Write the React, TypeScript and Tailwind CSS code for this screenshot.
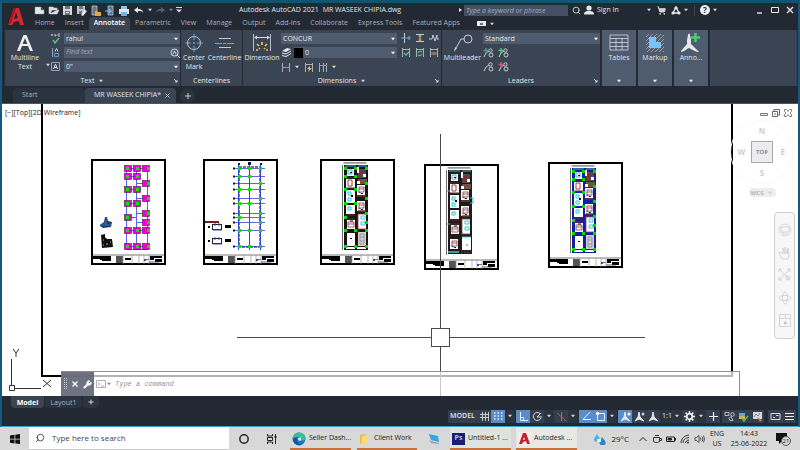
import type { ReactNode } from "react";
import { Circle, Search, ShoppingCart, Wrench } from "lucide-react";

type Point = [number, number];

function Icon({ w = 12, h = 12, children }: { w?: number; h?: number; children: ReactNode }) {
  return (
    <svg width={w} height={h} viewBox={`0 0 ${w} ${h}`} fill="none" className="shrink-0" aria-hidden="true">
      {children}
    </svg>
  );
}

function Caret({ className = "text-[#d5d9df]" }: { className?: string }) {
  return (
    <svg width="6" height="4" viewBox="0 0 6 4" className={`shrink-0 ${className}`} aria-hidden="true">
      <path d="M1 0.8h4L3 3.2z" fill="currentColor" />
    </svg>
  );
}

function IconButton({ label, className = "", children }: { label: string; className?: string; children: ReactNode }) {
  return (
    <button type="button" aria-label={label} className={`flex shrink-0 items-center justify-center ${className}`}>
      {children}
    </button>
  );
}

/* ---------- title bar ---------- */

const quickAccess: { label: string; icon: ReactNode }[] = [
  { label: "New", icon: <path d="M1 2h6l3 3v4H1zM7 2v3h3" fill="#e6e8eb" stroke="#8f969f" strokeWidth="0.5" /> },
  { label: "Open", icon: <path d="M1 9V2h4l1 1h3v2H4L2 9h7l2-4H9" fill="#d9dce0" stroke="#d9dce0" strokeWidth="0.5" /> },
  {
    label: "Save",
    icon: (
      <>
        <path d="M1 1h9v9H1z" fill="#d3d6db" />
        <path d="M3 1h5v3H3zM3 6h5v4H3z" fill="#6b7482" />
        <path d="M4 7h3v1H4z" fill="#e6e8eb" />
      </>
    ),
  },
  {
    label: "Save As",
    icon: (
      <>
        <path d="M1 1h8v8H1z" fill="#c2c6cd" />
        <path d="M3 1h4v3H3zM3 6h3v3H3z" fill="#6b7482" />
        <path d="M5 10l4-5 2 1-4 5z" fill="#eef0f2" />
        <path d="M5 10l1-1 1 2z" fill="#e0a53f" />
      </>
    ),
  },
  {
    label: "Open from Web & Mobile",
    icon: (
      <>
        <path d="M2 1h5v9H2z" fill="#6b7482" stroke="#cfd3d9" strokeWidth="0.7" />
        <path d="M5 6h2l1 1h3v4H5z" fill="#dca84a" />
      </>
    ),
  },
  {
    label: "Save to Web & Mobile",
    icon: (
      <>
        <path d="M4 1h5v9H4z" fill="#5f7184" stroke="#b8d4ea" strokeWidth="0.7" />
        <path d="M1 6h6M5 4l2 2-2 2" stroke="#7cc3f2" strokeWidth="1.2" />
      </>
    ),
  },
  {
    label: "Plot",
    icon: (
      <>
        <path d="M3 1h6v3H3z" fill="#8ec5ee" />
        <path d="M1 4h10v5H1z" fill="#e3e6ea" />
        <path d="M3 7h6v4H3z" fill="#6fb2e4" />
      </>
    ),
  },
];

function TitleBar() {
  return (
    <div className="flex h-[14px] items-center">
      <div className="flex items-center gap-[3px] pl-1">
        {quickAccess.map((item) => (
          <IconButton key={item.label} label={item.label} className="w-[11px]">
            <Icon w={11} h={11}>{item.icon}</Icon>
          </IconButton>
        ))}
      </div>
      <IconButton label="Undo" className="ml-1 w-[21px] gap-[3px]">
        <Icon w={10} h={8}>
          <path d="M0 4l4-3v2c3 0 5 1 5 4C8 5 7 5 4 5v2z" fill="#e6e8eb" />
        </Icon>
        <Caret />
      </IconButton>
      <IconButton label="Redo" className="w-[21px] gap-[3px] opacity-50">
        <Icon w={10} h={8}>
          <path d="M10 4L6 1v2C3 3 1 4 1 7c1-2 2-2 5-2v2z" fill="#8d95a1" />
        </Icon>
        <Caret />
      </IconButton>
      <IconButton label="Customize Quick Access Toolbar" className="w-2">
        <Icon w={6} h={6}>
          <path d="M0 0.5h6" stroke="#d5d9df" />
          <path d="M0 2.5h6L3 5.5z" fill="#d5d9df" />
        </Icon>
      </IconButton>
      <h1 className="ml-[56px] flex gap-1 whitespace-pre text-[7px]">
        <span>Autodesk AutoCAD 2021</span>
        <span>MR WASEEK CHIPIA.dwg</span>
      </h1>
      <div className="flex-1" />
      <Icon w={5} h={6}>
        <path d="M1 1l3 2-3 2z" fill="#e6e8eb" />
      </Icon>
      <input
        type="text"
        aria-label="Search help"
        placeholder="Type a keyword or phrase"
        className="ml-px h-[11px] w-[104px] bg-[#465062] px-[2px] text-[7px] italic outline-none placeholder:text-[#a4acb8]"
      />
      <IconButton label="Search" className="ml-[3px] w-[10px]">
        <Search size={9} strokeWidth={2.5} className="text-[#cfd4da]" />
      </IconButton>
      <button type="button" className="ml-[3px] flex w-[68px] items-center gap-[3px] text-[7px]">
        <Icon w={10} h={10}>
          <circle cx="5" cy="3" r="2.600" fill="#e6e8eb" />
          <path d="M0 9.500c0-3 2-3.500 5-3.500s5 .5 5 3.500z" fill="#e6e8eb" />
        </Icon>
        <span className="flex-1 text-left">Sign In</span>
        <Caret />
      </button>
      <IconButton label="Autodesk App Store" className="ml-1 w-[10px]">
        <ShoppingCart size={9} strokeWidth={2.5} fill="currentColor" className="text-[#cfd4da]" />
      </IconButton>
      <IconButton label="Stay Connected" className="ml-1 w-[20px] gap-[2px]">
        <Icon w={10} h={9}>
          <path d="M5 1L2 7h6z" stroke="#e6e8eb" strokeWidth="1.3" />
          <circle cx="5" cy="2" r="1.6" fill="#e6e8eb" />
          <circle cx="2" cy="7" r="1.6" fill="#e6e8eb" />
          <circle cx="8" cy="7" r="1.6" fill="#e6e8eb" />
        </Icon>
        <Caret />
      </IconButton>
      <span className="mx-1 h-[11px] w-px bg-[#3c4552]" />
      <IconButton label="Help" className="w-[20px] gap-[2px]">
        <span className="flex h-[10px] w-[10px] items-center justify-center rounded-full bg-[#eceef0] text-[8px] font-bold leading-none text-[#222933]">
          ?
        </span>
        <Caret />
      </IconButton>
      <div className="ml-[36px] mr-[3px] flex gap-[5px]">
        <IconButton label="Minimize" className="w-[10px]">
          <Icon w={8} h={8}><path d="M1 7h5" stroke="#e6e8eb" strokeWidth="1.4" /></Icon>
        </IconButton>
        <IconButton label="Maximize" className="w-[10px]">
          <Icon w={8} h={8}><path d="M.5 1.5h7v5h-7z" stroke="#e6e8eb" /></Icon>
        </IconButton>
        <IconButton label="Close" className="w-[10px]">
          <Icon w={8} h={8}><path d="M1 1l6 6M7 1L1 7" stroke="#e6e8eb" strokeWidth="1.4" /></Icon>
        </IconButton>
      </div>
    </div>
  );
}

const ribbonTabs = [
  "Home",
  "Insert",
  "Annotate",
  "Parametric",
  "View",
  "Manage",
  "Output",
  "Add-ins",
  "Collaborate",
  "Express Tools",
  "Featured Apps",
];

function Header() {
  return (
    <header className="flex h-[27px]">
      <IconButton label="Application menu" className="w-[28px]">
        <Icon w={16} h={19}>
          <path d="M6 1h5l5 17h-4l-1-4-5 1-2 3H0z" fill="#d8262f" />
          <path d="M8 5l2 6-4 1z" fill="#222933" />
          <path d="M6 1h2L3 16l-3 2z" fill="#a5161f" />
        </Icon>
      </IconButton>
      <div className="min-w-0 flex-1">
        <TitleBar />
        <nav className="flex h-[13px] items-stretch text-[7px]">
          {ribbonTabs.map((tab) => (
            <button
              key={tab}
              type="button"
              className={
                tab === "Annotate"
                  ? "rounded-t-sm bg-[#3b4453] px-[5px] font-semibold text-white"
                  : "px-[5px] text-[#a9b0ba]"
              }
            >
              {tab}
            </button>
          ))}
          <IconButton label="Ribbon display" className="ml-3 gap-[3px]">
            <span className="flex h-[5px] w-[9px] items-center justify-center bg-[#e6e8eb]">
              <span className="h-[2px] w-[3px] bg-[#67707d]" />
            </span>
            <Caret />
          </IconButton>
        </nav>
      </div>
    </header>
  );
}

/* ---------- ribbon ---------- */

function DropDown({ label, value, swatch = false }: { label: string; value: string; swatch?: boolean }) {
  return (
    <div className="relative flex h-[11px] w-full min-w-0 items-center bg-[#4f5b6e]">
      {swatch && <span className="h-[10px] w-[9px] shrink-0 bg-black" />}
      <select
        aria-label={label}
        className="h-full min-w-0 flex-1 appearance-none bg-transparent px-[2px] text-[7px] leading-none text-[#e6e8eb] outline-none"
      >
        <option>{value}</option>
      </select>
      <span className="pointer-events-none absolute right-[1px] flex">
        <Caret className="text-white" />
      </span>
    </div>
  );
}

function Panel({ title, className, caret, launcher, children }: {
  title: string;
  className: string;
  caret?: boolean;
  launcher?: boolean;
  children: ReactNode;
}) {
  return (
    <section className={`relative flex shrink-0 flex-col bg-[#3b4453] ${className}`}>
      <div className="flex flex-1 pt-[3px]">{children}</div>
      <h2 className="flex h-[10px] items-center justify-center gap-1 text-[7px]">
        {title}
        {caret && <Caret />}
      </h2>
      {launcher && (
        <button
          type="button"
          aria-label={`${title} settings`}
          className="absolute bottom-[2px] right-[1px] flex h-[6px] w-[6px] items-center justify-center"
        >
          <Icon w={4} h={4}><path d="M0 0l3 3M3 1v2H1" stroke="#d5d9df" /></Icon>
        </button>
      )}
    </section>
  );
}

function BigButton({ lines, className, children }: { lines: string[]; className: string; children: ReactNode }) {
  return (
    <button type="button" className={`flex shrink-0 flex-col items-center text-[7px] leading-[9px] ${className}`}>
      <span className="flex h-[20px] items-center">{children}</span>
      {lines.map((line) => (
        <span key={line} className="whitespace-nowrap">{line}</span>
      ))}
    </button>
  );
}

function TextPanel() {
  return (
    <Panel title="Text" className="w-[175px]" caret launcher>
      <BigButton lines={["Multiline", "Text"]} className="w-[40px]">
        <Icon w={16} h={18}>
          <path d="M6.5 1h3L16 17h-3l-2-5H5l-2 5H0zM8 4l-2.400 6h4.800z" fill="#eef0f2" />
        </Icon>
      </BigButton>
      <IconButton label="Text type" className="mr-[-2px] mt-[26px] h-[12px] w-[6px]">
        <Caret />
      </IconButton>
      <div className="flex min-w-0 flex-1 flex-col gap-[3px]">
        <div className="flex items-center gap-[3px]">
          <IconButton label="Check Spelling" className="w-[12px]">
            <Icon w={11} h={11}>
              <path d="M1 3l1-2 1 2M5 1v2h1V2H5M10 1H8v2h2" stroke="#c6cbd2" strokeWidth="0.8" />
              <path d="M3 7l2 3 4-5" stroke="#4fc27b" strokeWidth="1.500" />
            </Icon>
          </IconButton>
          <DropDown label="Text style" value="rahul" />
        </div>
        <div className="flex items-center gap-[3px]">
          <IconButton label="Text align" className="w-[12px]">
            <Icon w={11} h={11}>
              <path d="M2.500 1v9" stroke="#9aa3af" />
              <path d="M5 4.500l1.500-3L8 4.500" stroke="#d5d9df" />
              <path d="M4.500 6.500h4v3h-4z" stroke="#5f9fd0" />
            </Icon>
          </IconButton>
          <div className="flex h-[11px] w-full min-w-0 items-center bg-[#4f5b6e]">
            <input
              type="text"
              aria-label="Find text"
              placeholder="Find text"
              className="min-w-0 flex-1 px-[2px] text-[7px] italic outline-none placeholder:text-[#a4acb8]"
            />
            <Icon w={10} h={10}>
              <circle cx="4.500" cy="4.500" r="3.500" stroke="#d5d9df" />
              <path d="M3 6l1.500-3L6 6M7 7l3 3" stroke="#d5d9df" strokeWidth="1" />
            </Icon>
          </div>
        </div>
        <div className="flex items-center gap-[3px]">
          <IconButton label="Text frame" className="w-[12px]">
            <Icon w={11} h={11}>
              <path d="M1.500 1.500h8v8h-8z" stroke="#9aa3af" />
              <path d="M3.500 8l2-5 2 5M4 6.500h3" stroke="#d5d9df" />
            </Icon>
          </IconButton>
          <DropDown label="Text height" value={'0"'} />
        </div>
      </div>
    </Panel>
  );
}

const dimensionTools: { label: string; icon: ReactNode }[] = [
  { label: "Break", icon: <><path d="M3.500 0v10" stroke="#c6cbd2" /><path d="M0 5h10M8 3v4" stroke="#5fa8dd" /></> },
  { label: "Adjust Space", icon: <><path d="M1 1.500h8M1 8.500h8" stroke="#c6cbd2" /><path d="M5 2v6M3.500 3h3M3.500 7h3" stroke="#e0b04f" strokeWidth="1.200" /></> },
  { label: "Dimension Jog Line", icon: <path d="M0 6h3l1-4 2 6 2-6v4h2" stroke="#c6cbd2" /> },
  { label: "Inspect", icon: <><path d="M1.500 10V1M8.500 10V1M1 2.500h8" stroke="#aab1bb" /><path d="M3 6l2 2 3-3" stroke="#4fc27b" strokeWidth="1.300" /></> },
  { label: "Update", icon: <><path d="M1.500 10V1M8.500 10V1M1 2.500h8" stroke="#aab1bb" /><path d="M3 6c1-2 3-2 4-1M7 7c-1 2-3 2-4 1" stroke="#4fc27b" strokeWidth="1.200" /></> },
  { label: "Reassociate", icon: <><path d="M1.500 10V1M8.500 10V1M1 2.500h8" stroke="#aab1bb" /><path d="M2.500 5h5v3h-5z" fill="#94705f" /></> },
];

function DimensionsPanel() {
  return (
    <Panel title="Dimensions" className="ml-px w-[198px]" caret launcher>
      <BigButton lines={["Dimension"]} className="w-[38px]">
        <Icon w={20} h={19}>
          <path d="M1.500 0v17M18.500 0v17" stroke="#b8bec7" />
          <path d="M3 3.500h14" stroke="#d5d9df" />
          <path d="M2 3.500l3-2v4zM18 3.500l-3-2v4z" fill="#d5d9df" />
          <path d="M4 16h2M14 16h2M5 10l2 2M15 10l-2 2M10 8v3M7 14l1 1M13 14l-1 1" stroke="#f0bf58" strokeWidth="1.700" />
        </Icon>
      </BigButton>
      <div className="flex w-[116px] flex-col gap-[3px]">
        <DropDown label="Dimension style" value="CONCUR" />
        <div className="flex items-center gap-[3px]">
          <Icon w={10} h={11}>
            <path d="M1 4l5-3 4 1-5 3zM1 6.500l4 1 5-3v-1l-5 3-4-1zM1 9l4 1 5-3V6L5 9 1 8z" fill="#e6e8eb" />
          </Icon>
          <DropDown label="Dimension layer" value="0" swatch />
        </div>
        <div className="flex h-[11px] items-center gap-1">
          <IconButton label="Linear" className="gap-[3px]">
            <Icon w={10} h={10}><path d="M1.500 1v9M8.500 1v9" stroke="#aab1bb" /><path d="M1 5.500h8" stroke="#5fa8dd" /></Icon>
            <Caret />
          </IconButton>
          <IconButton label="Quick Dimension">
            <Icon w={10} h={10}>
              <path d="M1.500 10V1M8.500 10V1M1 2.500h8" stroke="#aab1bb" />
              <path d="M6 4L3 7h2l-1 3 4-4H6z" fill="#f0bf58" />
            </Icon>
          </IconButton>
          <IconButton label="Continue" className="gap-[3px]">
            <Icon w={10} h={10}>
              <path d="M1.500 1v9M5.500 1v9M8.500 1v9" stroke="#aab1bb" />
              <path d="M1 3.500h8" stroke="#5fa8dd" />
            </Icon>
            <Caret />
          </IconButton>
        </div>
      </div>
      <div className="ml-1 grid grid-cols-3 content-start gap-x-1 gap-y-1">
        {dimensionTools.map((tool) => (
          <IconButton key={tool.label} label={tool.label}>
            <Icon w={10} h={10}>{tool.icon}</Icon>
          </IconButton>
        ))}
      </div>
    </Panel>
  );
}

function LeaderIcon({ mark }: { mark?: string }) {
  return (
    <Icon w={11} h={10}>
      <path d="M1 9l2-4 3-2" stroke="#c6cbd2" />
      <circle cx="7.500" cy="2.500" r="1.700" stroke="#c6cbd2" />
      <circle cx="8" cy="7" r="2" stroke="#c6cbd2" />
      {mark && <path d="M3 0v5M.5 2.500h5" stroke={mark} strokeWidth="1.500" />}
    </Icon>
  );
}

function LeadersPanel() {
  return (
    <Panel title="Leaders" className="ml-px w-[158px]" launcher>
      <BigButton lines={["Multileader"]} className="w-[41px]">
        <Icon w={20} h={19}>
          <circle cx="15" cy="5" r="4" stroke="#c6cbd2" />
          <path d="M11 5H8L2 16" stroke="#c6cbd2" />
          <path d="M1 18l1-5 2 1z" fill="#c6cbd2" />
        </Icon>
      </BigButton>
      <div className="flex min-w-0 flex-1 flex-col gap-1">
        <DropDown label="Leader style" value="Standard" />
        <div className="flex gap-1">
          <IconButton label="Align leaders"><LeaderIcon mark="#5b86a8" /></IconButton>
          <IconButton label="Add leader"><LeaderIcon mark="#4fc27b" /></IconButton>
        </div>
        <div className="flex gap-1">
          <IconButton label="Collect leaders"><LeaderIcon /></IconButton>
          <IconButton label="Remove leader"><LeaderIcon mark="#cf5560" /></IconButton>
        </div>
      </div>
    </Panel>
  );
}

function CollapsedPanel({ title, children }: { title: string; children: ReactNode }) {
  return (
    <button
      type="button"
      className="ml-[2px] flex w-[34px] shrink-0 flex-col items-center bg-[#4f5b6e] pt-[2px] text-[7px]"
    >
      <span className="flex h-[20px] items-center">{children}</span>
      <span className="leading-[11px]">{title}</span>
      <span className="mt-auto pb-[3px]"><Caret className="text-white" /></span>
    </button>
  );
}

function Ribbon() {
  return (
    <div className="flex h-[56px] pl-[3px] pr-px">
      <TextPanel />
      <Panel title="Centerlines" className="ml-px w-[61px]">
        <BigButton lines={["Center", "Mark"]} className="w-[26px]">
          <Icon w={18} h={18}>
            <circle cx="9" cy="9" r="6.500" stroke="#c6cbd2" />
            <path d="M9 0v6M9 12v6M0 9h6M12 9h6M9 8v2M8 9h2" stroke="#5fa8dd" />
          </Icon>
        </BigButton>
        <BigButton lines={["Centerline"]} className="w-[35px]">
          <Icon w={20} h={18}>
            <path d="M4 4.500h12M4 13.500h12" stroke="#c6cbd2" />
            <path d="M0 9.500h7M8 9.500h3M12 9.500h7" stroke="#5fa8dd" />
          </Icon>
        </BigButton>
      </Panel>
      <DimensionsPanel />
      <LeadersPanel />
      <CollapsedPanel title="Tables">
        <Icon w={20} h={17}>
          <path d="M1 1h18v15H1zM1 4.500h18M1 8.500h18M1 12.500h18M7 4v12M13 4v12" stroke="#d5d9df" strokeWidth="0.8" />
        </Icon>
      </CollapsedPanel>
      <CollapsedPanel title="Markup">
        <Icon w={20} h={19}>
          <path
            d="M1 4l3-3M1 8l7-7M1 12L12 1M1 16L16 1M2 19L19 2M6 19L19 6M10 19l9-9M14 19l5-5M18 19l1-1"
            stroke="#aeb5bf"
            strokeWidth="0.8"
          />
          <path d="M4 4h7v5h5v6H4z" fill="#7cc3f7" />
        </Icon>
      </CollapsedPanel>
      <CollapsedPanel title="Anno...">
        <Icon w={20} h={20}>
          <path d="M8 2c1 5 2 8 1 10l7 7c-4-1-6-3-8-4-2 1-4 3-7 4l6-7C6 10 7 7 8 2z" fill="#e6e8eb" stroke="#e6e8eb" strokeWidth="1.500" />
          <path d="M14.500 1v9M10 5.500h9" stroke="#46cf72" strokeWidth="2.500" />
        </Icon>
      </CollapsedPanel>
      <div className="ml-[2px] flex-1 bg-[#3b4453]" />
    </div>
  );
}

function FileTabs() {
  return (
    <nav className="flex h-[18px] items-end border-b border-[#4b5462] pl-[11px] text-[7px]">
      <button type="button" className="h-[15px] w-[72px] rounded-t bg-[#2b333f] pl-[9px] text-left text-[#a9b0ba]">
        Start
      </button>
      <div className="flex h-[15px] w-[91px] items-center justify-between rounded-t bg-[#3b4453] pl-[9px] pr-[6px]">
        <button type="button" className="whitespace-nowrap">MR WASEEK CHIPIA*</button>
        <IconButton label="Close drawing">
          <Icon w={5} h={5}><path d="M.5.5l4 4M4.500.5l-4 4" stroke="#c6cbd2" /></Icon>
        </IconButton>
      </div>
      <IconButton label="New drawing" className="ml-[4px] h-[14px] w-[15px] rounded-full bg-[#2b333f]">
        <Icon w={6} h={6}><path d="M3 0v6M0 3h6" stroke="#c6cbd2" /></Icon>
      </IconButton>
    </nav>
  );
}

/* ---------- drawing sheets, in units of one sheet 75 x 106 ---------- */

const columns: Point[] = [
  [36, 9], [46, 9], [57, 9],
  [36, 17], [46, 17],
  [57, 24],
  [36, 30], [46, 30],
  [57, 39],
  [36, 44], [46, 44],
  [57, 54],
  [36, 58],
  [57, 63],
  [36, 71], [46, 71], [57, 71],
  [36, 87], [46, 87], [57, 87],
];

const gridRows = [9, 17, 24, 30, 39, 44, 54, 58, 63, 71, 87];

function Sheet({ x, y, children }: { x: number; y: number; children: ReactNode }) {
  return (
    <g transform={`translate(${x} ${y})`}>
      <rect x="1" y="1" width="73" height="104" fill="#fff" stroke="#000" strokeWidth="2" />
      {children}
      <path d="M2 96h71" stroke="#777" />
      <path d="M2 97h18v2H2zM9 99h11v2H9zM2 99h7v1H2zM11 101h9v1h-9z" fill="#000" />
      <path d="M25 97h7v7h-7z" fill="#555" />
      <path d="M32 96v9M41 96v9M48 96v9M53 96v9M58 96v9" stroke="#999" strokeWidth="0.7" />
      <path d="M34 99h6v2h-6zM59 97h12v2h-8v2h-4zM64 100h7v3h-7z" fill="#000" />
      <path d="M53 100h2v2h-2z" fill="#3c46c8" />
      <path d="M55 100h3v1h-3z" fill="#b06060" />
      <path d="M58 103h10" stroke="#333" strokeWidth="0.8" />
    </g>
  );
}

function FootingPlan() {
  return (
    <>
      <path
        d="M35.500 8v83M45.500 8v83M56.500 8v83M35 9.500h22M36 17.500h10M46 24.500h10M36 30.500h10M46 39.500h10M36 44.500h10M46 54.500h10M36 58.500h10M46 63.500h10M36 71.500h20M36 87.500h20M35 90.500h22"
        stroke="#5a5ef4"
      />
      {columns.map(([cx, cy]) => {
        const left = cx === 57 ? cx - 5 : cx === 36 ? cx - 2 : cx - 3;
        return (
          <g key={`${cx}-${cy}`}>
            <rect x={left - 0.500} y={cy - 2.500} width="7" height="6" fill="#f000d8" stroke="#54104c" strokeWidth="0.6" />
            <rect x={cx - 1} y={cy - 1} width="3" height="3" fill="#00e800" />
          </g>
        );
      })}
      <path d="M9 66l4-3 1-5h2l1 4 4 1-1 5-8 1-3-2z" fill="#24384e" />
      <path d="M12 64h4M15 58v8M9 66h11" stroke="#2f6fd8" />
      <path d="M10 76l4-1v3l2 2h5l1 8-11 1z" fill="#101010" />
      <path d="M12 81h1M15 85h2M19 83h1M12 86h1" stroke="#aaa" />
    </>
  );
}

function GridPlan() {
  return (
    <>
      <path d="M36 8h21v80H36z" stroke="#777" strokeWidth="2" strokeDasharray="3 1" />
      <path d="M35.500 5v86M46.500 5v86M57.500 5v86" stroke="#3a40d0" />
      {gridRows.map((row) => (
        <g key={row}>
          <path d={`M31 ${row}.5h31`} stroke="#3a40d0" strokeWidth="0.8" />
          <rect x="30" y={row - 0.500} width="2" height="2" fill="#10145c" />
        </g>
      ))}
      <path d="M35 4h2v2h-2zM45 3h3v3h-3zM57 4h2v2h-2z" fill="#10145c" />
      {columns.map(([cx, cy]) => (
        <rect key={`${cx}-${cy}`} x={cx - 1} y={cy - 1} width="3" height="3" fill="#00e800" />
      ))}
      <path d="M2 62h14v2H2z" fill="#741c1c" />
      {[65, 79].map((top) => (
        <g key={top}>
          <rect x="9.500" y={top + 0.500} width="9" height="5" stroke="#222" />
          <path d={`M10 ${top + 6}h9M12 ${top - 1}v3M16 ${top - 1}v3`} stroke="#3a40d0" />
          <path d={`M22 ${top + 1}h6v3h-6zM5 ${top + 2}h2v2h-2z`} fill="#000" />
        </g>
      ))}
    </>
  );
}

function Bed({ x, y }: { x: number; y: number }) {
  return (
    <g transform={`translate(${x} ${y})`}>
      <path d="M-1 0h8v10h-8z" fill="#fff" />
      <path d="M1 2h5v5H1zM1 4h5M0 7l3 1" stroke="#7c3a44" strokeWidth="0.8" />
      <path d="M3 8.500h2" stroke="#222" />
    </g>
  );
}

function FloorPlan({ wall, pillars, garageLeft }: { wall: string; pillars?: boolean; garageLeft?: boolean }) {
  return (
    <>
      <path d="M22.500 6v85M23.500 4h23" stroke="#444" strokeWidth="0.8" />
      <path d="M24 3h22v1H24z" fill="#999" />
      <rect x="24" y="6" width="24" height={garageLeft ? 84 : 85} fill={wall} />
      <path d="M25 7h11M38 7h9" stroke="#43b8c8" />

      {/* left bay */}
      <path d="M27 10h7v7h-7zM26 20h9v9h-9zM26 31h9v13h-9zM26 46h9v9h-9zM27 61h8v9h-8z" fill="#fff" />
      <path d="M28 11h4v4h-4z" stroke="#41b4d8" />
      <path d="M30 13h2v1h-2z" fill="#111" />
      <path d="M28 21h4v6h-4z" stroke="#94434f" />
      <path d="M25 19h9M26 29h9M25 56h10M26 60h9" stroke="#5c2a2a" />
      <path d="M28 33h3v3h-3zM28 39h3v3h-3zM28 48h3v3h-3z" stroke="#2cc4d0" />
      <path d="M31 36h2v2h-2z" fill="#111" />
      <path d="M28 63h6v5h-6zM28 65h6" stroke="#7c3a44" strokeWidth="0.8" />
      <path d="M30 62h3" stroke="#111" />

      {/* right bay */}
      <path d="M38 10h8v9h-8z" fill="#5a4444" />
      <path d="M37 8h2v6h-2zM43 15h3v3h-3z" fill="#fff" />
      <path d="M39 12h3v3h-3z" fill="#9c1f2c" />
      <path d="M38 20h9v5h-9z" fill="#74503f" />
      <path d="M37 22h3v3h-3z" fill="#fff" />
      <Bed x={38} y={26} />
      <Bed x={38} y={42} />
      <path d="M37 37h9M38 52h8" stroke="#5c4030" strokeWidth="1.500" />
      <path d="M38 55h8v15h-8z" fill="#fff" />
      <path d="M41 57h4v3h-4zM41 63h4v3h-4z" stroke="#3cc7d6" />
      <path d="M38 55h8M38 70h8M38 55v15" stroke="#8a4550" strokeWidth="0.8" />

      {garageLeft ? (
        <>
          <Bed x={27} y={75} />
          <path d="M38 73h9v13h-9z" fill="#fff" />
          <path d="M38 73h9" stroke="#45c4d4" />
          <path d="M42 81h2M24 88h11" stroke="#45c4d4" strokeWidth="1.500" />
          <path d="M37 88h10" stroke="#333" strokeWidth="3" strokeDasharray="2 1" />
        </>
      ) : (
        <>
          <path d="M27 74h8v13h-8zM26 88h9v2h-9zM37 88h9v2h-9z" fill="#fff" />
          <path d="M30 79h2v1h-2z" fill="#111" />
          <path d="M38 73h8v14h-8z" fill="#d2d2d2" />
          <path d="M40 75h4v10h-4zM40 78h4M40 82h4" stroke="#888" strokeWidth="0.8" />
        </>
      )}
      {pillars &&
        columns.map(([cx, cy]) => (
          <rect key={`${cx}-${cy}`} x={cx - 12} y={cy - 1} width="3" height="3" fill="#00dc00" />
        ))}
      {!pillars && <path d="M46 34h3v5h-3M23 27h3M23 60h3" stroke="#38bdc8" />}
    </>
  );
}

function ModelSpace() {
  return (
    <svg
      viewBox="2 104 796 292"
      preserveAspectRatio="xMinYMin meet"
      fill="none"
      className="absolute inset-0 h-full w-full"
      role="img"
      aria-label="Model space"
    >
      <path d="M42 104v272h690V104" stroke="#000" strokeWidth="2" />
      <Sheet x={91} y={159}><FootingPlan /></Sheet>
      <Sheet x={203} y={159}><GridPlan /></Sheet>
      <Sheet x={320} y={159}><FloorPlan wall="#1c1414" pillars /></Sheet>
      <Sheet x={424} y={164}><FloorPlan wall="#221a1a" garageLeft /></Sheet>
      <Sheet x={548} y={162}><FloorPlan wall="#1a1aa8" pillars /></Sheet>

      <path d="M440.500 134v194M440.500 347v49M237 337.500h194M450 337.500h195" stroke="#4a4a4a" />
      <rect x="431.500" y="328.500" width="18" height="18" stroke="#4a4a4a" />

      {/* UCS icon */}
      <path d="M11.500 359v26M15 388.500h26M9.500 385.500h5v5h-5z" stroke="#333" />
      <path d="M13 349l3 4 3-4M16 353v4M43 380l8 7M51 380l-8 7" stroke="#333" />
    </svg>
  );
}

function ViewCube() {
  return (
    <div className="absolute right-[4px] top-[16px] flex w-[64px] flex-col items-center text-[8px] font-bold leading-[10px] text-[#cfcfcf]">
      <div className="grid h-[64px] w-full grid-cols-3 grid-rows-3 place-items-center rounded-full border border-[#f7f7f7]">
        <span className="col-start-2">N</span>
        <span className="col-start-1 row-start-2">W</span>
        <button
          type="button"
          className="col-start-2 row-start-2 flex h-[22px] w-[22px] items-center justify-center border border-[#a8a8a8] bg-[#ececee] text-[6px] text-[#8b8f96]"
        >
          TOP
        </button>
        <span className="col-start-3 row-start-2">E</span>
        <span className="col-start-2 row-start-3">S</span>
      </div>
      <button
        type="button"
        className="mt-[4px] flex h-[9px] w-[27px] items-center justify-center gap-1 rounded bg-[#ececf1] text-[6px] text-[#b4b4bc]"
      >
        WCS
        <Caret className="text-[#cfcfd6]" />
      </button>
    </div>
  );
}

function NavigationBar() {
  return (
    <div className="absolute right-[3px] top-[108px] flex h-[127px] w-[21px] flex-col items-center justify-between rounded border border-[#d0d0d0] bg-[#f7f7f7] py-[10px]">
      <IconButton label="Steering wheel">
        <Icon w={14} h={14}>
          <circle cx="7" cy="7" r="6" stroke="#dcdcdc" />
          <path d="M3 4h8v5H3zM5 9v2h5" stroke="#d4d4d4" />
        </Icon>
      </IconButton>
      <IconButton label="Pan">
        <Icon w={14} h={14}>
          <path d="M4 13L1 7l2-1 2 2V2l2 6V1l2 7 1-6 1 7-1 4z" stroke="#d4d4d4" />
        </Icon>
      </IconButton>
      <IconButton label="Zoom extents">
        <Icon w={14} h={14}>
          <path d="M1 1l11 11M12 1L1 12M1 4V1h3M9 1h3v3M1 9v3h3" stroke="#d0d0d0" />
          <circle cx="10" cy="10" r="2" stroke="#d0d0d0" />
        </Icon>
      </IconButton>
      <IconButton label="Orbit">
        <Icon w={14} h={14}>
          <ellipse cx="7" cy="7" rx="6" ry="2.500" stroke="#d4d4d4" />
          <ellipse cx="7" cy="7" rx="2.500" ry="6" stroke="#d4d4d4" />
        </Icon>
      </IconButton>
      <IconButton label="ShowMotion">
        <Icon w={14} h={15}>
          <path d="M1.500 1.500h11v12h-11zM1.500 5.500h11M7.500 1.500v4" stroke="#d4d4d4" />
          <path d="M6 8l4 2-4 2z" fill="#c8c8c8" />
        </Icon>
      </IconButton>
    </div>
  );
}

function CommandLine() {
  return (
    <div className="absolute bottom-0 left-[59px] right-[58px] flex h-[25px] border-r border-t border-[#8e8e8e] bg-white/70">
      <div className="flex w-[33px] items-center gap-[5px] bg-[#5d6473]/90 pl-[3px] text-white">
        <Icon w={3} h={12}>
          <path d="M.5 0v12M2.500 0v12" stroke="#c9ccd2" strokeDasharray="1 1" />
        </Icon>
        <IconButton label="Close command line">
          <Icon w={6} h={6}><path d="M.5.5l5 5M5.500.5l-5 5" stroke="#fff" strokeWidth="1.300" /></Icon>
        </IconButton>
        <IconButton label="Customize">
          <Wrench size={9} fill="currentColor" />
        </IconButton>
      </div>
      <div className="flex flex-1 items-center pl-[2px]">
        <Icon w={10} h={8}>
          <path d="M.5.5h9v7h-9zM2 2.500l2 1.500-2 1.500M5 6h3" stroke="#999" strokeWidth="0.8" />
        </Icon>
        <Caret className="text-[#888]" />
        <input
          type="text"
          aria-label="Command"
          placeholder="Type a command"
          className="ml-[3px] flex-1 bg-transparent font-['Liberation_Mono',monospace] text-[7px] italic outline-none placeholder:text-[#969696]"
        />
      </div>
    </div>
  );
}

function Canvas() {
  return (
    <main className="relative min-h-0 flex-1 overflow-hidden bg-white">
      <ModelSpace />
      <button type="button" className="absolute left-[3px] top-[3px] text-[7px] leading-[11px] text-[#222]">
        [−][Top][2D Wireframe]
      </button>
      <div className="absolute right-[6px] top-[5px] flex items-center gap-1">
        <IconButton label="Minimize drawing">
          <Icon w={8} h={7}><path d="M.5 3.500h7v2h-7z" stroke="#777" /></Icon>
        </IconButton>
        <IconButton label="Restore drawing">
          <Icon w={8} h={8}><path d="M.5 2.500h5v5h-5zM2 2V.5h5.500V6H6M2 5h2" stroke="#666" /></Icon>
        </IconButton>
        <IconButton label="Close drawing window">
          <Icon w={8} h={8}><path d="M.5.500h2L4 2.500 5.500.500h2v2L6 4l1.500 1.500v2h-2L4 5.500 2.500 7.500h-2v-2L2 4 .5 2.500z" stroke="#666" strokeWidth="0.8" /></Icon>
        </IconButton>
      </div>
      <ViewCube />
      <NavigationBar />
      <CommandLine />
    </main>
  );
}

/* ---------- status bar ---------- */

const iconTones = { stroke: "#d5d9df" };

function StatusButton({ label, active = false, children }: { label: string; active?: boolean; children: ReactNode }) {
  return (
    <button
      type="button"
      aria-label={label}
      aria-pressed={active}
      className={`flex h-[13px] w-[14px] items-center justify-center ${active ? "bg-[#5b8cc8]" : "bg-[#353e4c]"}`}
    >
      <Icon w={11} h={11}>{children}</Icon>
    </button>
  );
}

function StatusMenu({ label }: { label: string }) {
  return (
    <IconButton label={label} className="h-[13px] w-[10px] bg-[#2b333f]">
      <Caret />
    </IconButton>
  );
}

function Person({ badge }: { badge?: string }) {
  return (
    <>
      <path d="M5 1l1 5 4 4-5-2-4 2 3-4z" fill="#e6e8eb" stroke="#e6e8eb" />
      {badge && <circle cx="9" cy="3" r="1.500" fill={badge} />}
    </>
  );
}

function StatusBar() {
  return (
    <footer className="flex h-[18px] items-center justify-end gap-x-px pb-[2px] pr-[2px] text-[7px]">
      <div className="flex">
        <button type="button" className="h-[13px] w-[29px] bg-[#353e4c] font-semibold">MODEL</button>
        <StatusButton label="Grid"><path d="M3.500 1v9M6.500 1v9M1 3.500h9M1 6.500h9M9.500 1v9" {...iconTones} strokeWidth="0.9" /></StatusButton>
        <StatusButton label="Snap" active>
          <path d="M1 2h9M1 5h9M1 8h9" stroke="#e9f1fb" strokeWidth="1.500" strokeDasharray="1.500 2" />
        </StatusButton>
        <StatusMenu label="Snap settings" />
      </div>
      <div className="flex">
        <StatusButton label="Ortho" active><path d="M2.500 1v8.500H10M2.500 6.500h3v3" stroke="#e9f1fb" /></StatusButton>
        <StatusButton label="Polar tracking">
          <path d="M8 2.500A4 4 0 1 0 9 7M5 6h5M5 6l4-4" {...iconTones} />
        </StatusButton>
        <StatusMenu label="Polar settings" />
        <StatusButton label="Isometric drafting">
          <path d="M1 2l9 8" stroke="#c04d57" />
          <path d="M5.500 1v9" stroke="#4e9a6b" />
        </StatusButton>
        <StatusMenu label="Isometric settings" />
      </div>
      <div className="flex">
        <StatusButton label="Object snap tracking" active><path d="M9 1L2 8.500h8" stroke="#e9f1fb" /></StatusButton>
        <StatusButton label="Object snap" active>
          <path d="M2.500 2.500h7v7h-7z" stroke="#e9f1fb" />
          <path d="M1 1h3v3H1z" fill="#e9f1fb" />
        </StatusButton>
        <StatusMenu label="Object snap settings" />
      </div>
      <div className="flex">
        <StatusButton label="Annotation visibility" active><Person badge="#fff" /></StatusButton>
        <StatusButton label="Auto scale"><Person badge="#c6cbd2" /></StatusButton>
        <StatusButton label="Annotation scale"><Person /></StatusButton>
        <button type="button" className="flex h-[13px] w-[22px] items-center justify-center gap-[2px] bg-[#2b333f]">
          1:1
          <Caret />
        </button>
        <StatusButton label="Workspace">
          <circle cx="5.500" cy="5.500" r="2.800" stroke="#eef0f2" strokeWidth="1.800" />
          <path d="M5.500 0v2M5.500 9v2M0 5.500h2M9 5.500h2M1.600 1.600l1.400 1.400M8 8l1.400 1.400M9.400 1.600L8 3M3 8L1.600 9.400" stroke="#eef0f2" strokeWidth="1.500" />
        </StatusButton>
        <StatusMenu label="Workspace settings" />
        <StatusButton label="Annotation monitor"><path d="M5.500 1v9M1 5.500h9" stroke="#eef0f2" strokeWidth="1.200" /></StatusButton>
      </div>
      <div className="ml-px flex">
        <StatusButton label="Isolate objects">
          <path d="M1 1.500h4v3H1zM5 7.500l2-2 2 4H6z" {...iconTones} strokeWidth="0.8" />
          <circle cx="8.500" cy="3.500" r="1.800" {...iconTones} strokeWidth="0.8" />
        </StatusButton>
        <StatusButton label="Graphics performance">
          <path d="M1 2h6v3H1z" fill="#5fa8dd" />
          <path d="M1 5h6v3H1z" fill="#e0b04f" />
          <path d="M4 7l2 3 4-5" stroke="#54c46c" strokeWidth="1.500" />
        </StatusButton>
        <StatusButton label="Graphics card">
          <path d="M1 1h9v7H1z" fill="#d5d9df" />
          <path d="M2 6l2-3 2 2 2-3" stroke="#7b8491" />
          <path d="M5 6l5 3-2 2z" fill="#cf7848" />
        </StatusButton>
      </div>
      <div className="ml-[3px] flex">
        <StatusButton label="Clean screen">
          <path d="M1 2.500h9v6H1zM6 4.500h2.500M3 6.500h2" {...iconTones} />
        </StatusButton>
        <StatusButton label="Customization"><path d="M1 2.500h9M1 5.500h9M1 8.500h9" stroke="#eef0f2" strokeWidth="1.200" /></StatusButton>
      </div>
    </footer>
  );
}

function LayoutTabs() {
  return (
    <nav className="flex h-[12px] items-stretch pl-[9px] text-[7px] leading-none">
      <button type="button" className="w-[33px] rounded-b bg-[#3b4453] font-bold text-white">Model</button>
      <button type="button" className="ml-px w-[37px] rounded-b bg-[#2b333f] text-[#a9b0ba]">Layout1</button>
      <IconButton label="New layout" className="ml-px w-[16px] rounded-b bg-[#2b333f]">
        <Icon w={6} h={6}><path d="M3 .5v5M.5 3h5" stroke="#d5d9df" /></Icon>
      </IconButton>
    </nav>
  );
}

/* ---------- taskbar ---------- */

function Task({ title, className, children }: { title: string; className: string; children: ReactNode }) {
  return (
    <button
      type="button"
      className={`flex h-full shrink-0 items-center gap-[3px] whitespace-nowrap border-b-2 border-[#c9713a] pl-[2px] pt-[2px] text-[7px] ${className}`}
    >
      {children}
      {title}
    </button>
  );
}

function Taskbar() {
  return (
    <div className="flex h-[23px] shrink-0 items-center bg-[#d7d8d7] text-[#222]">
      <IconButton label="Start" className="w-[29px]">
        <Icon w={10} h={10}>
          <path d="M0 1.500l4.500-.7v4H0zM5.300.7L10 0v4.800H5.300zM0 5.500h4.500v4L0 8.800zM5.300 5.500H10V10l-4.700-.6z" fill="#111" />
        </Icon>
      </IconButton>
      <div className="flex h-full w-[200px] items-center gap-[7px] border-b border-[#c8c8c8] bg-white pl-[6px]">
        <Search size={10} strokeWidth={1.800} className="-scale-x-100" />
        <input
          type="text"
          aria-label="Search Windows"
          placeholder="Type here to search"
          className="min-w-0 flex-1 text-[8px] outline-none placeholder:text-[#444]"
        />
      </div>
      <IconButton label="Cortana" className="w-[29px]"><Circle size={10} strokeWidth={3.500} /></IconButton>
      <IconButton label="Task View" className="w-[27px]">
        <Icon w={11} h={10}>
          <path d="M1.500 3.500h5v3h-5zM1.500 0v2h5V0M1.500 10V8h5v2M9.500 0v10" stroke="#222" />
          <path d="M8.500 2h2v2h-2z" fill="#222" />
        </Icon>
      </IconButton>
      <Task title="Seller Dash..." className="ml-[5px] w-[61px]">
        <Icon w={14} h={14}>
          <circle cx="7" cy="7" r="6.500" fill="#1878c8" />
          <path d="M.5 7C1 2 4 .5 7 .5c4 0 7 3 6.500 6C13 9 9 9 8.500 8 10 5 5 3 .5 7z" fill="#38bf95" />
          <path d="M5 7c-1 3 2 6 6 5C6 15 1 11 1 7c1-1 3-2 4 0z" fill="#1452a0" />
          <path d="M6 7c0-2 3-2 3-.5S8 8 9 9c-2 0-3-1-3-2z" fill="#e9f4fb" />
        </Icon>
      </Task>
      <Task title="Client Work" className="ml-[6px] w-[60px]">
        <Icon w={12} h={12}>
          <path d="M1 2l5-1 1 1h2v9H1z" fill="#e9b949" />
          <path d="M3 3l6-1v9H2z" fill="#f8d982" />
        </Icon>
      </Task>
      <IconButton label="Remote desktop" className="mx-[9px] w-[15px]">
        <Icon w={12} h={12}>
          <path d="M1 1l9 2 1 6-8-2z" fill="#38a3e6" />
          <path d="M1 7l2 1 8 2v1L3 10z" fill="#8fa5b3" />
        </Icon>
      </IconButton>
      <Task title="Untitled-1 ..." className="w-[61px] bg-[#dfe3dd]">
        <span className="flex h-[12px] w-[13px] items-center justify-center bg-[#1b1f6b] text-[7px] font-bold text-[#a9c4f8]">
          Ps
        </span>
      </Task>
      <Task title="Autodesk ..." className="ml-[5px] w-[61px] bg-[#e8e8e4]">
        <span className="flex h-[13px] w-[13px] items-center justify-center bg-[#f5eeee]">
          <Icon w={11} h={11}>
            <path d="M4 0h3l4 11H8L7 8 4 9l-1 2H0zM5 4L4 7l2-.500z" fill="#c41f2a" fillRule="evenodd" />
          </Icon>
        </span>
      </Task>
      <div className="flex-1" />
      <button type="button" className="flex items-center gap-[5px] text-[8px]">
        <Icon w={13} h={12}>
          <path d="M4 1l3 5a3 3 0 1 1-6 0z" fill="#45b4ec" />
          <path d="M9 4l3 4a3 3 0 1 1-5 0z" fill="#2b86cf" />
          <path d="M4 6h4v3H4z" fill="#e8f5fd" />
        </Icon>
        29°C
      </button>
      <div className="ml-[9px] flex gap-[4px]">
        <IconButton label="Show hidden icons"><Icon w={10} h={10}><path d="M1.500 7L5 3.500 8.500 7" stroke="#222" /></Icon></IconButton>
        <IconButton label="Meet now">
          <Icon w={10} h={10}><path d="M1.500 3.500h6v4l-2 1h-2l-2-1zM3 1.500h4M7.500 4.500h2v2h-2" stroke="#333" /></Icon>
        </IconButton>
        <IconButton label="Battery">
          <Icon w={10} h={10}><path d="M.5 3h8v4.500h-8zM9.500 4v2.500" stroke="#222" /><path d="M2 4.500h3.500V6H2z" fill="#222" stroke="#222" /></Icon>
        </IconButton>
        <IconButton label="Network">
          <Icon w={10} h={10}>
            <path d="M1 9C1 5 4 1.500 9 1M3 9c0-3 2-5 6-5.500M5.500 9C5.500 7.500 7 6 9 6" stroke="#333" />
            <circle cx="8" cy="8.500" r="1" fill="#333" />
          </Icon>
        </IconButton>
        <IconButton label="Volume">
          <Icon w={11} h={10}>
            <path d="M1 3.500h1.500L5 1.500v7L2.500 6.500H1zM6.500 3.500q1 1.500 0 3M8 2.500q2 2.500 0 5M9.500 1.500q2 3.500 0 7" stroke="#333" strokeWidth="0.8" />
          </Icon>
        </IconButton>
      </div>
      <button type="button" className="ml-[3px] w-[18px] text-center text-[7px] leading-[10px]">
        ENG
        <br />
        US
      </button>
      <button type="button" className="ml-1 w-[38px] whitespace-nowrap text-center text-[7px] leading-[10px]">
        14:43
        <br />
        25-06-2022
      </button>
      <button type="button" aria-label="21 notifications" className="relative ml-[8px] mr-[9px] h-[15px] w-[15px]">
        <Icon w={12} h={11}><path d="M0 0h11v8H6l-3 3V8H0z" fill="#111" /></Icon>
        <span className="absolute bottom-0 right-0 flex h-[10px] w-[10px] items-center justify-center rounded-full border border-[#555] bg-[#d7d8d7] text-[6px] leading-[8px]">
          21
        </span>
      </button>
    </div>
  );
}

export default function App() {
  return (
    <div className="flex h-screen flex-col overflow-hidden font-['Open_Sans','Noto_Sans',sans-serif] text-[#e1e4e8]">
      <div className="flex min-h-0 flex-1 flex-col border-x-2 border-b border-t-[3px] border-x-[#14587d] border-b-[#3aa0d4] border-t-[#0f5375] bg-[#222933]">
        <Header />
        <Ribbon />
        <FileTabs />
        <Canvas />
        <LayoutTabs />
        <StatusBar />
      </div>
      <Taskbar />
    </div>
  );
}
